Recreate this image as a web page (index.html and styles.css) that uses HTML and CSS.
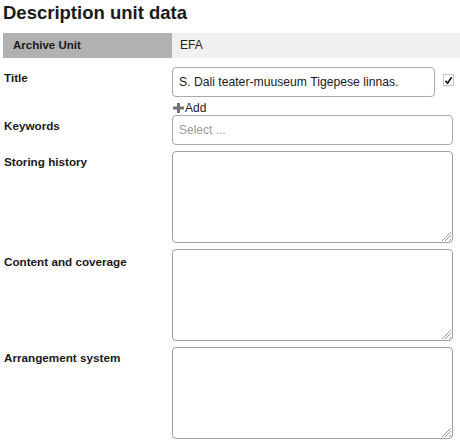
FILE: index.html
```html
<!DOCTYPE html>
<html>
<head>
<meta charset="utf-8">
<link rel="stylesheet" href="styles.css">
</head>
<body>
<h1 class="heading">Description unit data</h1>
<div class="archive-bar">
  <div class="archive-label">Archive Unit</div>
  <div class="archive-value">EFA</div>
</div>
<div class="form">
  <div class="row row-title">
    <div class="label">Title</div>
    <div class="field">
      <div class="title-line">
        <div class="input title-input">S. Dali teater-muuseum Tigepese linnas.</div>
        <span class="checkbox">
          <svg width="9" height="9" viewBox="0 0 9 9"><path d="M1.5 4.8 L3.6 7.2 L7.6 1.2" fill="none" stroke="#111" stroke-width="1.6"/></svg>
        </span>
      </div>
      <div class="add">
        <svg class="plus" width="11" height="10" viewBox="0 0 11 10"><path d="M4 0h3v3.5h4v3H7V10H4V6.5H0v-3h4z" fill="#707070"/></svg>
        <span>Add</span>
      </div>
    </div>
  </div>
  <div class="row row-keywords">
    <div class="label">Keywords</div>
    <div class="field">
      <div class="input select">Select ...</div>
    </div>
  </div>
  <div class="row">
    <div class="label">Storing history</div>
    <div class="field"><div class="textarea"><span class="grip"></span></div></div>
  </div>
  <div class="row">
    <div class="label label-low">Content and coverage</div>
    <div class="field"><div class="textarea"><span class="grip"></span></div></div>
  </div>
  <div class="row">
    <div class="label">Arrangement system</div>
    <div class="field"><div class="textarea"><span class="grip"></span></div></div>
  </div>
</div>
</body>
</html>
```
FILE: styles.css
```css
html, body {
  margin: 0;
  padding: 0;
  background: #fff;
}
body {
  font-family: "Liberation Sans", Arial, sans-serif;
  color: #111;
  width: 460px;
  height: 444px;
  overflow: hidden;
}
.heading {
  margin: 0;
  padding: 1px 0 0 3px;
  font-size: 18.5px;
  line-height: 23px;
  font-weight: bold;
  color: #1a1a1a;
}
.archive-bar {
  display: flex;
  margin: 9px 0 0 3px;
  height: 25px;
}
.archive-label {
  width: 169px;
  background: #b1b1b1;
  font-weight: bold;
  font-size: 11.5px;
  line-height: 25px;
  padding-left: 10px;
  box-sizing: border-box;
  color: #1a1a1a;
}
.archive-value {
  flex: 1;
  background: #f0f0f0;
  font-size: 12px;
  line-height: 25px;
  padding-left: 8px;
  color: #222;
}
.form {
  margin-top: 9px;
}
.row {
  display: flex;
  margin-bottom: 6px;
}
.row-title {
  margin-bottom: 0;
}
.label {
  width: 172px;
  flex: none;
  box-sizing: border-box;
  padding: 4px 0 0 4px;
  font-size: 11.7px;
  line-height: 14px;
  font-weight: bold;
  color: #1a1a1a;
}
.label-low {
  padding-top: 6px;
}
.field {
  width: 282px;
}
.title-line {
  display: flex;
  align-items: flex-start;
}
.input {
  box-sizing: border-box;
  border: 1px solid #a9a9a9;
  border-radius: 4px;
  background: #fff;
  font-size: 12px;
  padding-left: 6px;
}
.title-input {
  width: 264px;
  height: 30px;
  line-height: 28px;
  font-size: 12.2px;
  color: #1a1a1a;
}
.checkbox {
  margin: 7px 0 0 8px;
  width: 11px;
  height: 12px;
  box-sizing: border-box;
  border: 1px solid #c4c4c4;
  background: #fff;
  display: flex;
  align-items: center;
  justify-content: center;
}
.add {
  display: flex;
  align-items: flex-end;
  height: 18px;
  padding-left: 1px;
  font-size: 12px;
  line-height: 13px;
  color: #222;
}
.plus {
  margin-right: 1px;
  margin-bottom: 2px;
}
.select {
  width: 281px;
  height: 30px;
  line-height: 28px;
  color: #9a9a9a;
}
.textarea {
  position: relative;
  width: 281px;
  height: 92px;
  box-sizing: border-box;
  border: 1px solid #9e9e9e;
  border-radius: 4px;
  background: #fff;
}
.grip {
  position: absolute;
  right: 1px;
  bottom: 1px;
  width: 9px;
  height: 9px;
  background: linear-gradient(135deg, transparent 0 45%, #999 45% 52%, transparent 52% 65%, #999 65% 72%, transparent 72% 85%, #999 85% 92%, transparent 92%);
}
```
